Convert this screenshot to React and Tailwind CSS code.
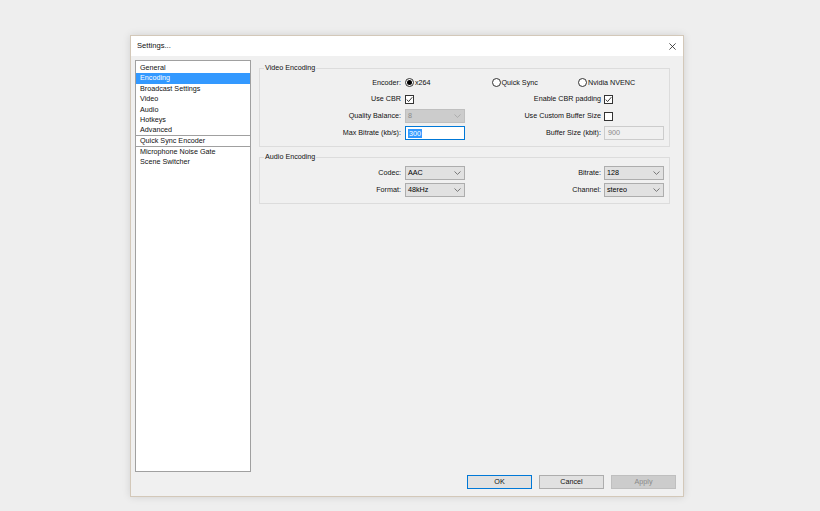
import React from "react";

const FONT = { fontFamily: '"Liberation Sans", Arial, sans-serif' };

function Chevron({ color = "#6b6b6b" }) {
  return (
    <svg width="7" height="4" viewBox="0 0 7 4">
      <polyline points="0.5,0.5 3.5,3.4 6.5,0.5" fill="none" stroke={color} strokeWidth="0.9" />
    </svg>
  );
}

function Select({ value, disabled }) {
  return (
    <div
      className={
        "w-[60px] h-[14px] border flex items-center justify-between pl-[2px] pr-[3px] " +
        (disabled ? "bg-[#cccccc] border-[#bfbfbf] text-[#8a8a8a]" : "bg-[#e1e1e1] border-[#adadad] text-black")
      }
    >
      <span>{value}</span>
      <Chevron color={disabled ? "#a8a8a8" : "#6b6b6b"} />
    </div>
  );
}

function Radio({ checked, label }) {
  return (
    <div className="flex items-center gap-[1px]">
      <span className="w-[9px] h-[9px] rounded-full border border-[#333333] bg-white flex items-center justify-center">
        {checked && <span className="w-[5px] h-[5px] rounded-full bg-black" />}
      </span>
      <span>{label}</span>
    </div>
  );
}

function Check({ checked }) {
  return (
    <span className="w-[9px] h-[9px] border border-[#333333] bg-white flex items-center justify-center">
      {checked && (
        <svg width="7" height="7" viewBox="0 0 7 7">
          <polyline points="0.8,3.6 2.6,5.6 6.3,1.2" fill="none" stroke="#222" strokeWidth="0.9" />
        </svg>
      )}
    </span>
  );
}

function Row({ className = "", l1, c1, l2, c2 }) {
  return (
    <div className={"flex items-center h-[14px] " + className}>
      <div className="w-[145px] pr-[4px] text-right">{l1}</div>
      <div className="w-[60px] flex items-center">{c1}</div>
      <div className="w-[139px] pr-[3px] text-right">{l2}</div>
      <div className="w-[60px] flex items-center">{c2}</div>
    </div>
  );
}

const items = [
  "General",
  "Encoding",
  "Broadcast Settings",
  "Video",
  "Audio",
  "Hotkeys",
  "Advanced",
  "Quick Sync Encoder",
  "Microphone Noise Gate",
  "Scene Switcher",
];

export default function App() {
  return (
    <div className="w-[820px] h-[511px] bg-[#eeeeee] pl-[130px] pt-[35px] text-[7.2px] text-[#111111]" style={FONT}>
      <div className="w-[554px] h-[462px] border border-[#d3c8b9] bg-[#f0f0f0] flex flex-col shadow-[0_0_8px_rgba(0,0,0,0.12)]">
        {/* title bar */}
        <div className="h-[20px] bg-white flex items-center justify-between pl-[6px] pr-[7px]">
          <span className="text-[7.6px]">Settings...</span>
          <svg width="7" height="7" viewBox="0 0 7 7">
            <path d="M0.4 0.4 L6.6 6.6 M6.6 0.4 L0.4 6.6" stroke="#222" strokeWidth="0.8" />
          </svg>
        </div>
        {/* body */}
        <div className="flex-1 flex pl-[4px] pr-[7px]">
          <div className="mt-[4px] w-[116px] h-[412px] border border-[#a0a0a0] bg-white pt-[1.5px]">
            {items.map((it, i) => (
              <div
                key={it}
                className={
                  "h-[10.5px] flex items-center pl-[4px] pt-[0.5px] " +
                  (i === 1 ? "bg-[#3399ff] text-white " : "") +
                  (i === 6 || i === 7 ? "border-b border-[#a0a0a0]" : "")
                }
              >
                {it}
              </div>
            ))}
          </div>
          <div className="ml-[8px] w-[417px] flex flex-col pt-[8px] pb-[7px]">
            <fieldset className="w-[411px] border border-[#dcdcdc] pt-[4px] pb-[6px]">
              <legend className="ml-[4px] px-[1px] leading-[8px]">Video Encoding</legend>
              <div className="flex items-center h-[14px]">
                <div className="w-[145px] pr-[4px] text-right">Encoder:</div>
                <div className="w-[86.5px]">
                  <Radio checked label="x264" />
                </div>
                <div className="w-[86.5px]">
                  <Radio label="Quick Sync" />
                </div>
                <div>
                  <Radio label="Nvidia NVENC" />
                </div>
              </div>
              <Row className="mt-[2px]" l1="Use CBR" c1={<Check checked />} l2="Enable CBR padding" c2={<Check checked />} />
              <Row
                className="mt-[3px]"
                l1="Quality Balance:"
                c1={<Select value="8" disabled />}
                l2="Use Custom Buffer Size"
                c2={<Check />}
              />
              <Row
                className="mt-[3px]"
                l1="Max Bitrate (kb/s):"
                c1={
                  <div className="w-[60px] h-[14px] border border-[#0078d7] bg-white flex items-center pl-[2px]">
                    <span className="bg-[#3399ff] text-white px-[1px] leading-[9px]">300</span>
                  </div>
                }
                l2="Buffer Size (kbit):"
                c2={
                  <div className="w-[60px] h-[14px] border border-[#cccccc] bg-[#f0f0f0] text-[#8a8a8a] flex items-center pl-[3px]">
                    900
                  </div>
                }
              />
            </fieldset>
            <fieldset className="mt-[6px] w-[411px] border border-[#dcdcdc] pt-[5px] pb-[6px]">
              <legend className="ml-[4px] px-[1px] leading-[8px]">Audio Encoding</legend>
              <Row l1="Codec:" c1={<Select value="AAC" />} l2="Bitrate:" c2={<Select value="128" />} />
              <Row className="mt-[3px]" l1="Format:" c1={<Select value="48kHz" />} l2="Channel:" c2={<Select value="stereo" />} />
            </fieldset>
            <div className="mt-auto flex justify-end gap-[7px]">
              <button className="w-[65px] h-[14px] border border-[#0078d7] bg-[#e1e1e1] flex items-center justify-center">
                OK
              </button>
              <button className="w-[65px] h-[14px] border border-[#adadad] bg-[#e1e1e1] flex items-center justify-center">
                Cancel
              </button>
              <button className="w-[65px] h-[14px] border border-[#bfbfbf] bg-[#cccccc] text-[#8a8a8a] flex items-center justify-center">
                Apply
              </button>
            </div>
          </div>
        </div>
      </div>
    </div>
  );
}
